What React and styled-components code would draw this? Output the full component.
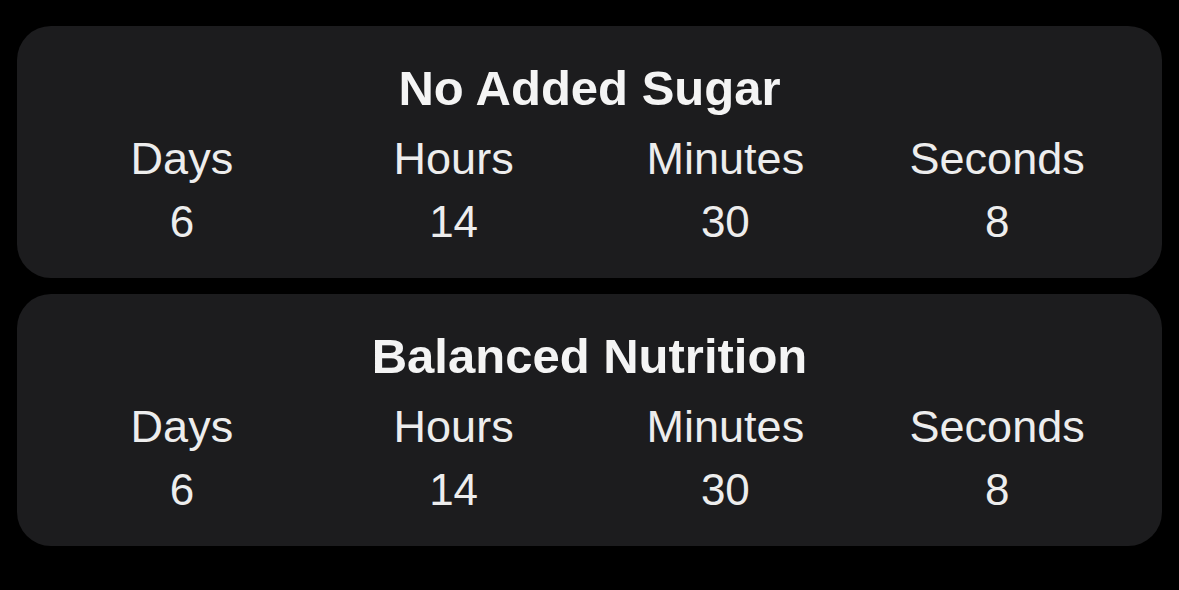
import styled, { createGlobalStyle } from 'styled-components';

const GlobalStyle = createGlobalStyle`
  html, body {
    margin: 0;
    padding: 0;
    background: #000;
  }
  body {
    font-family: "Liberation Sans", Arial, sans-serif;
    color: #f2f2f2;
  }
`;

const Page = styled.div`
  display: flex;
  flex-direction: column;
  gap: 16px;
  padding: 26px 17px 0;
  min-height: 590px;
  box-sizing: border-box;
`;

const Card = styled.section`
  background: #1c1c1e;
  border-radius: 34px;
  padding: 34px 29px 29px;
  height: 252px;
  box-sizing: border-box;
`;

const Title = styled.h2`
  margin: 0 0 17px;
  font-size: 49px;
  line-height: 56px;
  font-weight: 700;
  text-align: center;
  color: #f4f4f4;
`;

const Grid = styled.div`
  display: grid;
  grid-template-columns: repeat(4, 1fr);
`;

const Unit = styled.div`
  display: flex;
  flex-direction: column;
  align-items: center;
  gap: 12px;
`;

const Label = styled.span`
  font-size: 45px;
  line-height: 52px;
  color: #ededed;
`;

const Value = styled.span`
  font-size: 44px;
  line-height: 50px;
  color: #ededed;
`;

const timers = [
  { title: 'No Added Sugar', days: 6, hours: 14, minutes: 30, seconds: 8 },
  { title: 'Balanced Nutrition', days: 6, hours: 14, minutes: 30, seconds: 8 },
];

const Countdown = ({ title, days, hours, minutes, seconds }) => {
  const units = [
    ['Days', days],
    ['Hours', hours],
    ['Minutes', minutes],
    ['Seconds', seconds],
  ];
  return (
    <Card>
      <Title>{title}</Title>
      <Grid>
        {units.map(([label, value]) => (
          <Unit key={label}>
            <Label>{label}</Label>
            <Value>{value}</Value>
          </Unit>
        ))}
      </Grid>
    </Card>
  );
};

export default function App() {
  return (
    <>
      <GlobalStyle />
      <Page>
        {timers.map((t) => (
          <Countdown key={t.title} {...t} />
        ))}
      </Page>
    </>
  );
}
